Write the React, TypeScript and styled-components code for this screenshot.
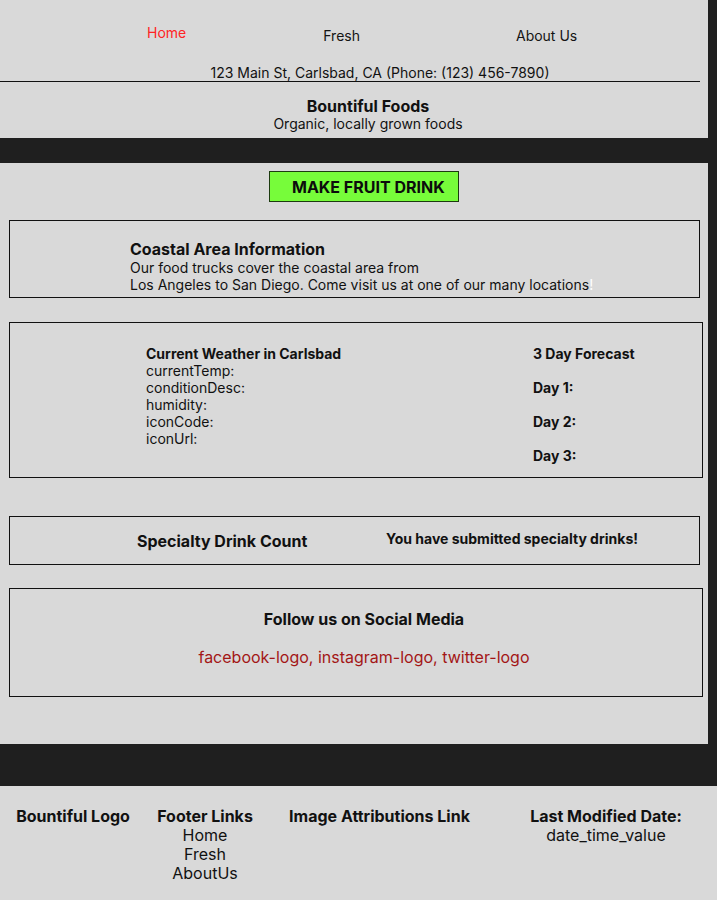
import React from "react";
import styled, { createGlobalStyle } from "styled-components";

const Global = createGlobalStyle`
  html, body { margin: 0; padding: 0; }
  body {
    background: #1f1f1f;
    font-family: Inter, "Noto Sans", sans-serif;
    color: #111;
  }
  * { box-sizing: border-box; }
`;

const Page = styled.div`
  width: 717px;
  display: flex;
  flex-direction: column;
`;

const Header = styled.header`
  width: 708px;
  background: #d9d9d9;
  height: 138px;
  display: flex;
  flex-direction: column;
`;

const NavList = styled.nav`
  display: flex;
  margin-top: 27px;
  padding-left: 147px;
`;

const NavItem = styled.a<{ $active?: boolean; $offset: number }>`
  margin-left: ${(p) => p.$offset}px;
  margin-top: ${(p) => (p.$active ? -3 : 0)}px;
  font-size: 14px;
  line-height: 18px;
  color: ${(p) => (p.$active ? "#ff2424" : "#141414")};
  text-decoration: none;
`;

const Address = styled.div`
  margin-top: 19px;
  width: 700px;
  border-bottom: 1px solid #111;
  padding-left: 60px;
  text-align: center;
  font-size: 14px;
  line-height: 17px;
`;

const Brand = styled.div`
  margin-top: 15px;
  padding-left: 28px;
  text-align: center;
  font-size: 14px;
  line-height: 18px;
`;

const BrandName = styled.div`
  font-size: 16px;
  font-weight: 700;
`;

const Gap = styled.div<{ $h: number }>`
  height: ${(p) => p.$h}px;
`;

const Main = styled.main`
  width: 708px;
  background: #d9d9d9;
  padding: 8px 0 47px 9px;
  display: flex;
  flex-direction: column;
`;

const DrinkButton = styled.button`
  align-self: flex-start;
  margin-left: 260px;
  height: 31px;
  width: 190px;
  background: #77fc3a;
  border: 1px solid #1c3a10;
  padding: 1px 0 0 22px;
  text-align: left;
  font-family: inherit;
  font-size: 16px;
  font-weight: 700;
  color: #0c0c0c;
`;

const Box = styled.section<{ $w: number; $mt: number }>`
  width: ${(p) => p.$w}px;
  margin-top: ${(p) => p.$mt}px;
  border: 1px solid #111;
`;

const CoastalBody = styled.div`
  padding: 18px 0 4px 120px;
  font-size: 14px;
  line-height: 17px;
`;

const CoastalTitle = styled.h2`
  margin: 0;
  font-size: 16px;
  line-height: 20px;
  font-weight: 700;
`;

const White = styled.span`
  color: #fff;
`;

const WeatherBody = styled.div`
  display: flex;
  padding: 22px 0 13px 136px;
  font-size: 14px;
  line-height: 17px;
`;

const WeatherCol = styled.div<{ $w?: number }>`
  display: flex;
  flex-direction: column;
  width: ${(p) => (p.$w ? `${p.$w}px` : "auto")};
`;

const Bold = styled.div`
  font-weight: 700;
`;

const ForecastDay = styled.div`
  font-weight: 700;
  margin-top: 17px;
`;

const CountBody = styled.div`
  height: 47px;
  display: flex;
  align-items: center;
  padding-left: 127px;
`;

const CountTitle = styled.h2`
  margin: 0;
  width: 249px;
  font-size: 16px;
  font-weight: 700;
`;

const CountText = styled.div`
  margin-top: -5px;
  font-size: 14px;
  font-weight: 700;
`;

const SocialBody = styled.div`
  height: 107px;
  display: flex;
  flex-direction: column;
  align-items: center;
  padding: 20px 0 0 16px;
`;

const SocialTitle = styled.h2`
  margin: 0;
  font-size: 16px;
  line-height: 20px;
  font-weight: 700;
`;

const SocialLinks = styled.div`
  margin-top: 18px;
  font-size: 16px;
  line-height: 20px;
  color: #a31616;
`;

const Footer = styled.footer`
  margin-top: 42px;
  width: 717px;
  height: 114px;
  background: #d9d9d9;
  display: grid;
  grid-template-columns: 146px 118px 231px 222px;
  padding-top: 21px;
  font-size: 16px;
  line-height: 19px;
`;

const FooterCol = styled.div`
  display: flex;
  flex-direction: column;
  align-items: center;
  text-align: center;
`;

export default function App() {
  return (
    <>
      <Global />
      <Page>
        <Header>
          <NavList>
            <NavItem $active $offset={0} href="#">Home</NavItem>
            <NavItem $offset={137} href="#">Fresh</NavItem>
            <NavItem $offset={156} href="#">About Us</NavItem>
          </NavList>
          <Address>123 Main St, Carlsbad, CA (Phone: (123) 456-7890)</Address>
          <Brand>
            <BrandName>Bountiful Foods</BrandName>
            <div>Organic, locally grown foods</div>
          </Brand>
        </Header>
        <Gap $h={25} />
        <Main>
          <DrinkButton>MAKE FRUIT DRINK</DrinkButton>
          <Box $w={691} $mt={18}>
            <CoastalBody>
              <CoastalTitle>Coastal Area Information</CoastalTitle>
              <div>Our food trucks cover the coastal area from</div>
              <div>
                Los Angeles to San Diego. Come visit us at one of our many locations<White>!</White>
              </div>
            </CoastalBody>
          </Box>
          <Box $w={694} $mt={24}>
            <WeatherBody>
              <WeatherCol $w={387}>
                <Bold>Current Weather in Carlsbad</Bold>
                <div>currentTemp:</div>
                <div>conditionDesc:</div>
                <div>humidity:</div>
                <div>iconCode:</div>
                <div>iconUrl:</div>
              </WeatherCol>
              <WeatherCol>
                <Bold>3 Day Forecast</Bold>
                <ForecastDay>Day 1:</ForecastDay>
                <ForecastDay>Day 2:</ForecastDay>
                <ForecastDay>Day 3:</ForecastDay>
              </WeatherCol>
            </WeatherBody>
          </Box>
          <Box $w={691} $mt={38}>
            <CountBody>
              <CountTitle>Specialty Drink Count</CountTitle>
              <CountText>You have submitted specialty drinks!</CountText>
            </CountBody>
          </Box>
          <Box $w={694} $mt={23}>
            <SocialBody>
              <SocialTitle>Follow us on Social Media</SocialTitle>
              <SocialLinks>facebook-logo, instagram-logo, twitter-logo</SocialLinks>
            </SocialBody>
          </Box>
        </Main>
        <Footer>
          <FooterCol>
            <Bold>Bountiful Logo</Bold>
          </FooterCol>
          <FooterCol>
            <Bold>Footer Links</Bold>
            <div>Home</div>
            <div>Fresh</div>
            <div>AboutUs</div>
          </FooterCol>
          <FooterCol>
            <Bold>Image Attributions Link</Bold>
          </FooterCol>
          <FooterCol>
            <Bold>Last Modified Date:</Bold>
            <div>date_time_value</div>
          </FooterCol>
        </Footer>
      </Page>
    </>
  );
}
